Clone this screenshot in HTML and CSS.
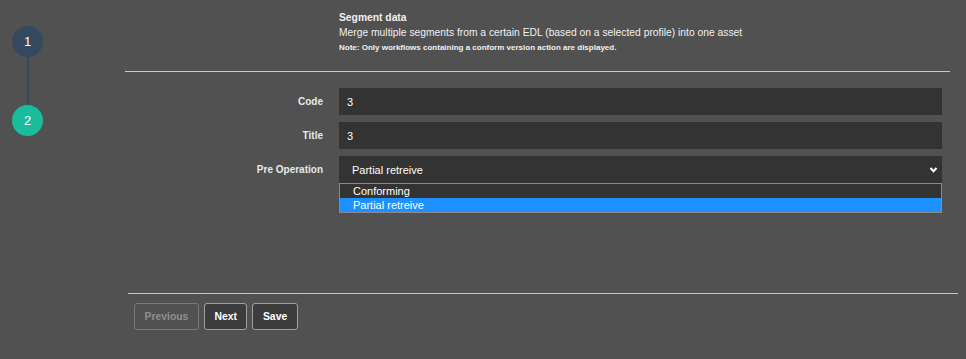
FILE: index.html
```html
<!DOCTYPE html>
<html lang="en">
<head>
  <meta charset="UTF-8" />
  <meta name="viewport" content="width=device-width, initial-scale=1.0" />
  <title>Segment data</title>
  <link rel="stylesheet" href="styles.css">
</head>
<body>
  <div class="wizard">
    <!-- Step indicator -->
    <div class="stepper">
      <div class="step step-done">1</div>
      <div class="step-line"></div>
      <div class="step step-active">2</div>
    </div>

    <div class="wizard-main">
      <div class="intro">
        <div class="intro-title">Segment data</div>
        <div class="intro-text">Merge multiple segments from a certain EDL (based on a selected profile) into one asset</div>
        <div class="intro-note">Note: Only workflows containing a conform version action are displayed.</div>
      </div>
      <hr class="divider" />

      <div class="form">
        <div class="form-row">
          <label class="form-label" for="code">Code</label>
          <input class="form-input" type="text" id="code" value="3" />
        </div>
        <div class="form-row">
          <label class="form-label" for="title">Title</label>
          <input class="form-input" type="text" id="title" value="3" />
        </div>
        <div class="form-row">
          <label class="form-label">Pre Operation</label>
          <div class="select-wrap">
            <div class="select-box">
              <span>Partial retreive</span>
              <svg class="chevron" width="9" height="6" viewBox="0 0 9 6">
                <path d="M1.5 1 L4.5 4.2 L7.5 1" fill="none" stroke="#fff" stroke-width="2" />
              </svg>
            </div>
            <!-- open dropdown list -->
            <div class="select-list">
              <div class="select-option">Conforming</div>
              <div class="select-option selected">Partial retreive</div>
            </div>
          </div>
        </div>
      </div>

      <div class="footer">
        <hr class="divider" />
        <div class="buttons">
          <button class="btn btn-disabled" disabled>Previous</button>
          <button class="btn">Next</button>
          <button class="btn">Save</button>
        </div>
      </div>
    </div>
  </div>
</body>
</html>
```

FILE: styles.css
```css
body {
  margin: 0;
  padding: 0;
  background-color: #515151;
  font-family: "Liberation Sans", Arial, sans-serif;
  font-size: 11px;
  color: #f0f0f0;
}
.wizard {
  display: flex;
  min-height: 359px;
}
/* Stepper */
.stepper {
  width: 113px;
  padding: 26px 0 0 12px;
  display: flex;
  flex-direction: column;
  align-items: flex-start;
}
.step {
  width: 31px;
  height: 31px;
  border-radius: 50%;
  display: flex;
  align-items: center;
  justify-content: center;
  color: #fff;
  font-size: 13px;
}
.step-done {
  background-color: #34495e;
}
.step-active {
  background-color: #1abc9c;
}
.step-line {
  width: 2px;
  height: 48px;
  margin-left: 15px;
  background-color: #34495e;
}
/* Main area */
.wizard-main {
  flex: 1;
  padding-right: 16px;
}
.intro {
  padding: 10px 0 0 214px;
  font-size: 10.3px;
  line-height: 15px;
}
.intro-title {
  font-weight: bold;
}
.intro-note {
  font-size: 8px;
  font-weight: bold;
  line-height: 16px;
  margin-bottom: 15px;
}
.divider {
  border: none;
  border-top: 1px solid #c8c8c8;
  margin: 0;
}
.form {
  padding: 16px 8px 0 0;
  display: flex;
  flex-direction: column;
  gap: 7px;
}
.form-row {
  display: flex;
  align-items: center;
  gap: 16px;
}
.form-label {
  width: 198px;
  text-align: right;
  font-size: 10px;
  font-weight: bold;
  color: #e8e8e8;
}
.form-input {
  flex: 1;
  height: 27px;
  box-sizing: border-box;
  padding: 0 8px;
  border: none;
  border-radius: 0;
  background-color: #333333;
  color: #fff;
  font-family: inherit;
  font-size: 11px;
}
.select-wrap {
  flex: 1;
  position: relative;
}
.select-box {
  height: 27px;
  box-sizing: border-box;
  padding: 0 4px 0 13px;
  display: flex;
  align-items: center;
  justify-content: space-between;
  background-color: #333333;
  color: #fff;
}
.select-list {
  position: absolute;
  top: 100%;
  left: 0;
  right: 0;
  border: 1px solid #8a8a8a;
  background-color: #333333;
}
.select-option {
  height: 14px;
  line-height: 14px;
  padding-left: 13px;
  color: #fff;
}
.select-option.selected {
  background-color: #1e90ff;
}
/* Footer */
.footer {
  margin: 110px -8px 0 3px;
}
.buttons {
  display: flex;
  gap: 5px;
  padding: 9px 0 0 6px;
}
.btn {
  height: 27px;
  padding: 0 9.5px;
  border: 1px solid #a0a0a0;
  border-radius: 3px;
  background-color: #3c3c3c;
  color: #fff;
  font-family: inherit;
  font-size: 10.4px;
  font-weight: bold;
  cursor: pointer;
}
.btn-disabled {
  color: #8e8e8e;
  border-color: #7a7a7a;
  background-color: #515151;
  cursor: default;
}
```
